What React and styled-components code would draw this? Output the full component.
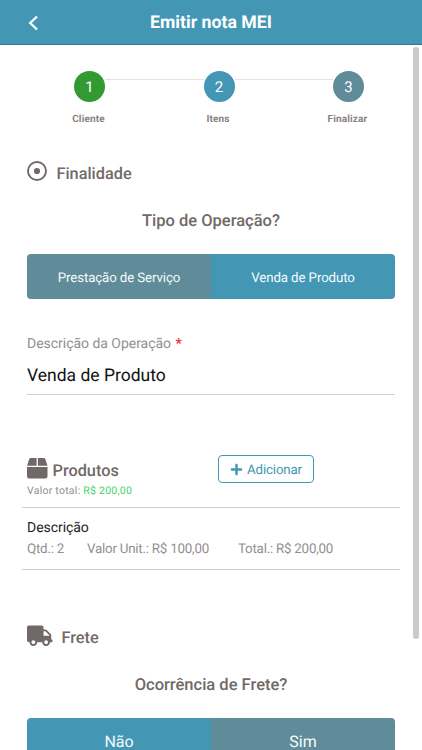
import styled, { createGlobalStyle } from 'styled-components'
import { FaBox, FaTruck, FaPlus } from 'react-icons/fa'

const GlobalStyle = createGlobalStyle`
  * {
    box-sizing: border-box;
  }
  body {
    margin: 0;
    background: #fff;
    font-family: Roboto, sans-serif;
    text-rendering: geometricPrecision;
    overflow: hidden;
  }
  button, input {
    text-rendering: inherit;
  }
`

const Screen = styled.div`
  display: flex;
  flex-direction: column;
  width: 422px;
  height: 750px;
  overflow: hidden;
`

const Header = styled.header`
  display: grid;
  grid-template-columns: 60px 1fr 60px;
  align-items: center;
  flex-shrink: 0;
  height: 45px;
  background: #4397b5;
  border-bottom: 1px solid #397790;
`

const BackButton = styled.button`
  display: flex;
  padding: 2px 0 0 28px;
  border: 0;
  background: none;
  color: #fff;
`

const Title = styled.h1`
  margin: 0;
  padding-top: 2px;
  font-size: 17.7px;
  font-weight: 700;
  line-height: 42px;
  text-align: center;
  color: #fff;
`

const Body = styled.div`
  display: flex;
  flex: 1;
  min-height: 0;
`

const Content = styled.main`
  width: 368px;
  margin-left: 27px;
  flex-shrink: 0;
`

const ScrollBar = styled.div`
  width: 6px;
  height: 592px;
  margin: 2px 0 0 18px;
  border-radius: 3px;
  background: #cbcbcb;
`

const Steps = styled.div`
  display: flex;
  justify-content: center;
  padding-top: 26px;
  height: 116px;
  margin-right: -16px;
`

const Step = styled.div`
  display: flex;
  flex-direction: column;
  align-items: center;
  width: 31px;
`

const StepCircle = styled.div`
  width: 31px;
  height: 31px;
  border-radius: 50%;
  background: ${(props) => props.$color};
  color: #fff;
  font-size: 15px;
  line-height: 32px;
  text-align: center;
`

const StepLabel = styled.span`
  margin-top: 11px;
  margin-right: 2px;
  font-size: 10px;
  font-weight: 700;
  line-height: 14px;
  letter-spacing: 0.15px;
  white-space: nowrap;
  color: #86827f;
`

const StepLine = styled.div`
  width: 98.5px;
  height: 1px;
  margin-top: 8px;
  background: #e2e2e2;
`

const SectionTitle = styled.h2`
  display: flex;
  align-items: center;
  gap: ${(props) => props.$gap}px;
  height: 24px;
  margin: 0;
  font-size: 16.3px;
  font-weight: 500;
  color: #716968;

  svg {
    flex-shrink: 0;
    margin-bottom: ${(props) => props.$lift || 0}px;
  }
`

const Question = styled.h3`
  margin: ${(props) => props.$top}px 0 0;
  font-size: 16.5px;
  font-weight: 500;
  line-height: 24px;
  text-align: center;
  color: #716968;
`

const Toggle = styled.div`
  display: grid;
  grid-template-columns: 1fr 1fr;
  height: 45px;
  margin-top: 20px;
  border-radius: 4px;
  overflow: hidden;
`

const ToggleButton = styled.button`
  padding: ${(props) => (props.$size ? 1 : 3)}px 0 0;
  border: 0;
  font-family: inherit;
  font-size: ${(props) => props.$size || 13.3}px;
  letter-spacing: ${(props) => (props.$size ? 0 : -0.12)}px;
  color: #f4fbfc;
  background: ${(props) => (props.$active ? '#4397b5' : '#608b98')};
`

const FieldLabel = styled.label`
  display: block;
  margin-top: 35px;
  font-size: 14px;
  line-height: 20px;
  letter-spacing: -0.03px;
  color: #929090;
`

const Required = styled.span`
  margin-left: 1px;
  font-weight: 700;
  color: #ed2f37;
`

const Field = styled.input`
  display: block;
  width: 100%;
  height: 41px;
  padding: 4px 0 0;
  border: 0;
  border-bottom: 1px solid #d0d0d0;
  font-family: inherit;
  font-size: 17.5px;
  color: #111;
  outline: none;
`

const ProductsHeader = styled.div`
  display: grid;
  grid-template-columns: 191px 1fr;
  height: 49px;
  margin-top: 63px;
`

const TotalLine = styled.p`
  margin: 2px 0 0;
  font-size: 10.5px;
  line-height: 14px;
  letter-spacing: 0.25px;
  color: #929090;

  span {
    color: #3fd56b;
  }
`

const AddButton = styled.button`
  display: flex;
  align-items: center;
  justify-content: center;
  gap: 4px;
  width: 96px;
  height: 28px;
  margin-top: -3px;
  padding: 2px 0 0;
  border: 1px solid #4397b5;
  border-radius: 4px;
  background: #fff;
  font-family: inherit;
  font-size: 13.3px;
  letter-spacing: -0.15px;
  color: #4397b5;

  svg {
    margin-bottom: 2px;
  }
`

const ProductRow = styled.div`
  height: 63px;
  margin: 0 -5px;
  padding: 10px 5px 0;
  border-top: 1px solid #cecece;
  border-bottom: 1px solid #cecece;
`

const ProductName = styled.p`
  margin: 0;
  font-size: 14px;
  line-height: 20px;
  letter-spacing: -0.05px;
  color: #1d1d1d;
`

const ProductValues = styled.div`
  display: grid;
  grid-template-columns: 60px 151px 1fr;
  padding-top: 1px;
  font-size: 13.4px;
  line-height: 21px;
  letter-spacing: -0.25px;
  white-space: nowrap;
  color: #929090;
`

const Freight = styled.section`
  margin-top: 55px;
`

const steps = [
  { number: 1, label: 'Cliente', color: '#339a33' },
  { number: 2, label: 'Itens', color: '#4397b5' },
  { number: 3, label: 'Finalizar', color: '#608b98' },
]

const ChevronIcon = () => (
  <svg width="11" height="16" viewBox="0 0 11 16" fill="none">
    <path d="M9 1.5L2.2 8L9 14.5" stroke="currentColor" strokeWidth="2.3" />
  </svg>
)

const TargetIcon = () => (
  <svg width="20" height="20" viewBox="0 0 20 20" fill="none">
    <circle cx="10" cy="10" r="9" stroke="currentColor" strokeWidth="1.9" />
    <circle cx="10" cy="10" r="3.1" fill="currentColor" />
  </svg>
)

const Stepper = () => (
  <Steps>
    {steps.map((s, i) => [
      i > 0 && <StepLine key={`line-${s.number}`} />,
      <Step key={s.number}>
        <StepCircle $color={s.color}>{s.number}</StepCircle>
        <StepLabel>{s.label}</StepLabel>
      </Step>,
    ])}
  </Steps>
)

const App = () => (
  <>
    <GlobalStyle />
    <Screen>
      <Header>
        <BackButton type="button" aria-label="Voltar">
          <ChevronIcon />
        </BackButton>
        <Title>Emitir nota MEI</Title>
      </Header>
      <Body>
        <Content>
          <Stepper />
          <SectionTitle $gap={9.5} $lift={4}>
            <TargetIcon />
            Finalidade
          </SectionTitle>
          <Question $top={25}>Tipo de Operação?</Question>
          <Toggle>
            <ToggleButton type="button">Prestação de Serviço</ToggleButton>
            <ToggleButton type="button" $active>
              Venda de Produto
            </ToggleButton>
          </Toggle>
          <FieldLabel htmlFor="descricao">
            Descrição da Operação <Required>*</Required>
          </FieldLabel>
          <Field id="descricao" defaultValue="Venda de Produto" />
          <ProductsHeader>
            <div>
              <SectionTitle $gap={5} $lift={3}>
                <FaBox size={20.5} />
                Produtos
              </SectionTitle>
              <TotalLine>
                Valor total: <span>R$ 200,00</span>
              </TotalLine>
            </div>
            <AddButton type="button">
              <FaPlus size={13} />
              Adicionar
            </AddButton>
          </ProductsHeader>
          <ProductRow>
            <ProductName>Descrição</ProductName>
            <ProductValues>
              <span>Qtd.: 2</span>
              <span>Valor Unit.: R$ 100,00</span>
              <span>Total.: R$ 200,00</span>
            </ProductValues>
          </ProductRow>
          <Freight>
            <SectionTitle $gap={9} $lift={3}>
              <FaTruck size={25.5} />
              Frete
            </SectionTitle>
            <Question $top={25}>Ocorrência de Frete?</Question>
            <Toggle>
              <ToggleButton type="button" $active $size={16}>
                Não
              </ToggleButton>
              <ToggleButton type="button" $size={16}>
                Sim
              </ToggleButton>
            </Toggle>
          </Freight>
        </Content>
        <ScrollBar />
      </Body>
    </Screen>
  </>
)

export default App
